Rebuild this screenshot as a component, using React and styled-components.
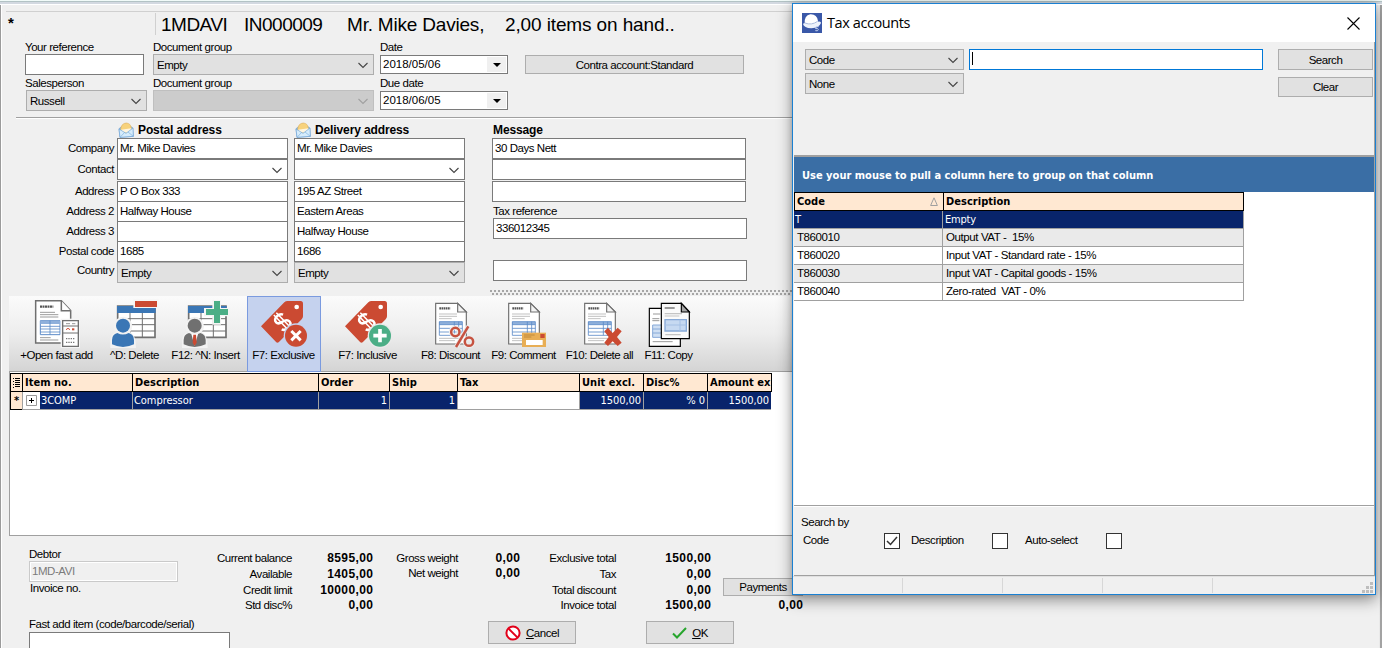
import React from "react";
import styled, { createGlobalStyle } from "styled-components";

const sans = '"Liberation Sans", Arial, sans-serif';
const tahoma = '"DejaVu Sans Condensed", "DejaVu Sans", sans-serif';
const segoe = '"Open Sans", "Noto Sans", sans-serif';

const Global = createGlobalStyle`
  * { box-sizing: border-box; }
  body { margin: 0; background: #f0f0f0; overflow: hidden; }
`;

/* ---------- window frame ---------- */
const Window = styled.div`
  position: relative;
  width: 1382px;
  height: 648px;
  overflow: hidden;
  display: flex;
  flex-direction: column;
  background: #f0f0f0;
  box-shadow: inset 1px 0 #9b9b9b, inset 2px 0 #fff, inset -2px 0 #a3a3a3, inset -3px 0 #e9e9e9;
  font: 11.5px/14px ${sans};
  letter-spacing: -0.45px;
  color: #000;
  white-space: pre;
`;
const TopStrip = styled.div`
  height: 5px;
  flex: none;
  background: linear-gradient(#f1fbf9 0 1px, #b3c3c5 1px 2px, #d3d9e1 2px 4px, #fff 4px);
`;
const Heading = styled.header`
  height: 25px;
  margin: 6px 6px 0;
  border-top: 1px solid #d0d0d0;
  display: flex;
  flex: none;
  font-size: 19px;
  line-height: 25px;
`;
const Star = styled.div`
  width: 149px;
  padding-left: 2px;
  font-size: 15px;
  font-weight: bold;
  line-height: 21px;
`;
const HeadingText = styled.div`
  display: flex;
  border-left: 1px solid #d0d0d0;
  height: 22px;
  margin-top: 1px;
  padding-left: 5px;
  line-height: 24px;
`;
const HeadingPart = styled.span`
  width: ${(p) => p.$w}px;
  letter-spacing: ${(p) => p.$ls}px;
`;

/* ---------- form controls ---------- */
const Box = styled.div`
  width: ${(p) => p.$w}px;
  height: ${(p) => p.$h || 21}px;
  flex: none;
  border: 1px solid ${(p) => (p.$focus ? "#0078d7" : p.$off ? "#cacaca" : "#7a7a7a")};
  background: ${(p) => (p.$off ? "#f0f0f0" : "#fff")};
  color: ${(p) => (p.$off ? "#7b7b7b" : "#000")};
  padding: 0 2px;
  line-height: ${(p) => (p.$h || 21) - 3}px;
  box-shadow: ${(p) => (p.$off ? "inset 0 0 0 1px #fff" : "none")};
`;
const Combo = styled.div`
  width: ${(p) => p.$w}px;
  height: ${(p) => p.$h || 21}px;
  flex: none;
  display: flex;
  align-items: center;
  justify-content: space-between;
  padding: 1px 4px 0 3px;
  border: 1px solid ${(p) => (p.$white ? "#7a7a7a" : p.$off ? "#bfbfbf" : "#adadad")};
  background: ${(p) => (p.$white ? "#fff" : p.$off ? "#ccc" : "#e1e1e1")};
`;
const DateBox = styled.div`
  width: 128px;
  height: 19px;
  margin-top: 1px;
  display: flex;
  justify-content: space-between;
  border: 1px solid #7a7a7a;
  background: #fff;
  padding: 1px 1px 1px 2px;
  line-height: 15px;
  letter-spacing: 0;
`;
const DateArrow = styled.div`
  width: 19px;
  background: #f0f0f0;
  display: grid;
  place-items: center;
`;
const Button = styled.div`
  width: ${(p) => p.$w}px;
  height: ${(p) => p.$h}px;
  flex: none;
  display: flex;
  align-items: center;
  justify-content: center;
  gap: 5px;
  border: 1px solid #adadad;
  background: #e1e1e1;
`;

const Chevron = ({ faint }) => (
  <svg width="12" height="7" viewBox="0 0 12 7">
    <path d="M1.5 1 L6 5.5 L10.5 1" fill="none" stroke={faint ? "#a0a0a0" : "#444"} strokeWidth="1.1" />
  </svg>
);
const Select = ({ children, off, ...rest }) => (
  <Combo $off={off} {...rest}>
    <span>{children}</span>
    <Chevron faint={off} />
  </Combo>
);
const DateField = ({ children }) => (
  <DateBox>
    <span>{children}</span>
    <DateArrow>
      <svg width="8" height="4" viewBox="0 0 8 4"><path d="M0 0H8L4 4Z" fill="#000" /></svg>
    </DateArrow>
  </DateBox>
);

const DocumentFields = styled.section`
  display: flex;
  flex: none;
  height: 81px;
  padding: 4px 0 0 25px;
`;
const FieldColumn = styled.div`
  width: ${(p) => p.$w}px;
  padding-top: ${(p) => p.$top || 0}px;
`;
const Field = styled.div`
  height: 36px;
`;
const Caption = styled.div`
  height: 14px;
  line-height: 14px;
`;
const Divider = styled.div`
  height: 2px;
  flex: none;
  margin: 0 8px 0 16px;
  background: linear-gradient(#a0a0a0 50%, #fff 50%);
`;

/* ---------- addresses ---------- */
const Addresses = styled.section`
  display: flex;
  flex: none;
  height: 170px;
  padding: 3px 0 0 24px;
`;
const AddressLabels = styled.div`
  width: 93px;
  padding: 16px 3px 0 0;
  text-align: right;
`;
const AddressLabel = styled.div`
  height: ${(p) => p.$h}px;
  line-height: 20px;
`;
const AddressColumn = styled.div`
  width: ${(p) => p.$w}px;
`;
const ColumnTitle = styled.div`
  height: 16px;
  display: flex;
  align-items: center;
  gap: 4px;
  padding-left: ${(p) => p.$left || 0}px;
  font-size: 12px;
  font-weight: bold;
  letter-spacing: -0.12px;
`;
const JoinedInputs = styled.div`
  margin-top: ${(p) => p.$top || 0}px;
  & > * + * { margin-top: -1px; }
`;
const Spaced = styled.div`
  margin-top: ${(p) => p.$top || 0}px;
  margin-left: ${(p) => p.$left || 0}px;
`;

const Envelope = () => (
  <svg width="16" height="16" viewBox="0 0 48 48">
    <path d="M3 20 L23 6 L44 17 L46 43 L6 46 Z" fill="#8fbfe8" stroke="#6c9fd0" strokeWidth="2" />
    <path d="M8 21 Q10 4 25 3 Q38 4 40 18 L41 26 L24 33 L9 27Z" fill="#f7d27c" stroke="#dba64a" strokeWidth="1.5" />
    <path d="M9 23 L40 19 L41 26 L25 32 L9 28Z" fill="#fff5df" />
    <path d="M3 21 L24 34 L45 18 L46 43 L6 46 Z" fill="#d6ecfb" stroke="#6fa5d8" strokeWidth="2" />
    <path d="M6 46 L20 31 M46 43 L30 30" stroke="#7db1de" strokeWidth="2" fill="none" />
  </svg>
);

const SplitterRow = styled.div`
  height: 7px;
  flex: none;
  display: flex;
  padding: 1px 0 0 490px;
`;
const Splitter = styled.div`
  width: 303px;
  height: 5px;
  background:
    conic-gradient(from 270deg at 2px 2px, #a6a6a6 90deg, transparent 0) 0 0 / 4px 5px,
    conic-gradient(from 270deg at 2px 2px, #a6a6a6 90deg, transparent 0) 2px 3px / 4px 5px;
`;

/* ---------- toolbar ---------- */
const Toolbar = styled.nav`
  height: 76px;
  flex: none;
  width: 784px;
  margin-left: 9px;
  padding-left: 1px;
  display: flex;
  background: linear-gradient(#fbfbfb, #ededed 50%, #d4d4d4);
  border-bottom: 1px solid #a0a0a0;
`;
const Tool = styled.div`
  width: ${(p) => p.$w}px;
  margin: 0 ${(p) => p.$gap || 0}px;
  height: 76px;
  flex: none;
  display: flex;
  flex-direction: column;
  align-items: center;
  padding-top: ${(p) => (p.$active ? 1 : 2)}px;
  border: ${(p) => (p.$active ? "1px solid #7a9adf" : "none")};
  background: ${(p) => (p.$active ? "#c5d2ee" : "transparent")};
  svg { display: block; flex: none; }
`;
const ToolLabel = styled.div`
  line-height: 14px;
  letter-spacing: -0.45px;
  margin-right: 1px;
`;

const RED = "#cb4a32", BLUE = "#3a76b5", GREEN = "#4bae86", GREY = "#707070";

const Order = ({ x }) => (
  <g transform={`translate(${x} 38)`}>
    <path d="M2 2H68L94 28V124H2Z" fill="#fff" stroke="#707070" strokeWidth="3.5" />
    <path d="M68 2V28H94Z" fill="#f4f4f4" stroke="#707070" strokeWidth="3.5" />
    <path d="M13 17H46" stroke="#555" strokeWidth="7" strokeDasharray="5 1.5" />
    <path d="M12 34H66M12 41H66M12 48H50M12 107H82M12 114H60" stroke="#b5b5b5" strokeWidth="2.5" />
    <path d="M12 57H82V66H12Z" fill="#8fb0db" />
    <path d="M13 57H82V98H13ZM13 66H82M13 77H82M13 88H82M58 57V98M71 57V98" fill="none" stroke="#5d8bc8" strokeWidth="2.5" />
  </g>
);
const GridSheet = ({ x }) => (
  <g transform={`translate(${x} 0)`}>
    <path d="M2 48H114V142H2Z" fill="#fff" stroke={GREY} strokeWidth="5" />
    <path d="M0 48H116V69H0Z" fill={BLUE} />
    <path d="M39 69V142M76 69V142M2 86H114M2 104H114M2 123H114" stroke={GREY} strokeWidth="3" />
  </g>
);
const Person = ({ x, fill, tie }) => (
  <g transform={`translate(${x} 0)`}>
    <path d="M-4 174V152Q-3 131 13 127A28 28 0 1 1 55 127Q73 133 73 174Z" fill="#f2f2f2" />
    <circle cx="34" cy="107" r="21" fill={fill} />
    <path d="M1 163V150Q1 133 17 129Q34 138 51 129Q67 133 67 150V163Q50 171 34 171Q18 171 1 163Z" fill={fill} />
    {tie && <path d="M24 132L34 168L44 132Z" fill="#fff" />}
    {tie && <path d="M30 134H38L40 158L34 168L28 158Z" fill={RED} />}
  </g>
);
const Tag = ({ x }) => (
  <g transform={`translate(${x} 0)`}>
    <path d="M0 109L70 37Q74 33 80 33H119Q126 33 126 41V79Q126 84 122 88L53 157Q47 160 43 154Z" fill={RED} />
    <circle cx="107" cy="51" r="7" fill="#fff" />
    <g transform="translate(65 96) rotate(-44) scale(1.15)" fill="none" stroke="#fff" strokeWidth="6.5">
      <path d="M14 -13Q10 -21 0 -21Q-13 -21 -13 -11Q-13 -3 0 -1Q14 2 14 11Q14 21 0 21Q-12 21 -15 12" />
      <path d="M-4 -29V29M5 -29V29" strokeWidth="4" />
    </g>
  </g>
);

const icons = {
  fast: (
    <svg width="50" height="50" viewBox="96 24 150 150">
      <path d="M107 32H184L212 62V159H107Z" fill="#fff" stroke={GREY} strokeWidth="4.5" />
      <path d="M184 32V62H212" fill="#fff" stroke={GREY} strokeWidth="4.5" />
      <path d="M120 50H160" stroke="#555" strokeWidth="7" strokeDasharray="6 1.5" />
      <path d="M120 67H165M120 74H175M120 81H175M120 143H152M120 150H175" stroke="#888" strokeWidth="2.5" />
      <path d="M121 92H180V134H121Z" fill="#fff" stroke="#5d8bc8" strokeWidth="3" />
      <path d="M121 92H180V102H121Z" fill="#8fb0db" />
      <path d="M121 109H180M121 117H180M121 126H180M150 92V134" stroke="#5d8bc8" strokeWidth="2.5" />
      <path d="M182 86H240V174H182Z" fill="#f4f4f4" />
      <path d="M188 92H235V169H188Z" fill="#fff" stroke={GREY} strokeWidth="4" />
      <path d="M188 108H235M188 129H235" stroke={GREY} strokeWidth="3" />
      <path d="M198 101H210M216 101H226" stroke="#999" strokeWidth="3" />
      <path d="M198 119L204 115L210 119" stroke={RED} strokeWidth="3" fill="none" />
      <path d="M216 115H223V121H216Z" fill={RED} />
      <path d="M198 146H226M198 157H226" stroke="#777" strokeWidth="4" strokeDasharray="4 3" />
    </svg>
  ),
  del: (
    <svg width="50" height="50" viewBox="330 24 150 150">
      <GridSheet x={351} />
      <path d="M400 28H476V54H400Z" fill="#f6f6f6" />
      <path d="M405 33H471V51H405Z" fill={RED} />
      <Person x={335} fill={BLUE} />
    </svg>
  ),
  insert: (
    <svg width="50" height="50" viewBox="543 24 150 150">
      <GridSheet x={564} />
      <path d="M637 30H663V54H688V79H663V104H637V79H612V54H637Z" fill="#f4f4f4" />
      <path d="M642 33H660V57H684V75H660V99H642V75H618V57H642Z" fill={GREEN} />
      <Person x={550} fill={GREY} tie />
    </svg>
  ),
  exclusive: (
    <svg width="50" height="50" viewBox="777 24 150 150">
      <Tag x={783} />
      <circle cx="888" cy="137" r="37" fill="#c5d2ee" />
      <circle cx="888" cy="137" r="33" fill={RED} />
      <path d="M874 123L902 151M902 123L874 151" stroke="#fff" strokeWidth="9" />
    </svg>
  ),
  inclusive: (
    <svg width="50" height="50" viewBox="54 24 150 150">
      <Tag x={60} />
      <circle cx="165" cy="137" r="37" fill="#eaeaea" />
      <circle cx="165" cy="137" r="33" fill={GREEN} />
      <path d="M165 117V157M145 137H185" stroke="#fff" strokeWidth="11" />
    </svg>
  ),
  discount: (
    <svg width="50" height="50" viewBox="303 24 150 150">
      <Order x={330} />
      <g fill="none" stroke="#eeeeee" strokeWidth="13">
        <circle cx="390" cy="125" r="12" /><circle cx="432" cy="156" r="12" /><path d="M429 109L394 170" />
      </g>
      <g fill="none" stroke="#c65341" strokeWidth="7.5">
        <circle cx="391" cy="126" r="12.5" /><circle cx="432" cy="155" r="12.5" /><path d="M430 109L393 171" />
      </g>
    </svg>
  ),
  comment: (
    <svg width="50" height="50" viewBox="519 24 150 150">
      <Order x={546} />
      <path d="M588 128H660V171H588Z" fill="#e8ae55" />
      <path d="M600 150H650V165H600Z" fill="#fff" />
      <path d="M643 132H656V144H643Z" fill={RED} />
      <path d="M594 135H626M594 141H616" stroke="#b98438" strokeWidth="2.5" />
    </svg>
  ),
  deleteAll: (
    <svg width="50" height="50" viewBox="747 24 150 150">
      <Order x={774} />
      <path d="M835 124L846 113L860 129L875 113L887 124L873 141L887 158L875 168L860 154L846 168L835 158L848 141Z" fill={RED} />
    </svg>
  ),
  copy: (
    <svg width="50" height="50" viewBox="954 24 150 150">
      <path d="M970 55H1063V169H970Z" fill="#fff" stroke="#000" strokeWidth="3.5" />
      <path d="M981 72H1003M979 86H1000M979 92H1000M980 155H1040" stroke="#999" strokeWidth="3" />
      <path d="M980 105H1010V142H980Z" fill="#cfdff3" stroke="#86a9d8" strokeWidth="3" />
      <path d="M980 117H1010M980 129H1010" stroke="#86a9d8" strokeWidth="3" />
      <path d="M1006 40H1066L1090 65V146H1006Z" fill="#fafafa" stroke="#000" strokeWidth="3.5" />
      <path d="M1066 40V66H1090Z" fill="#a6a6a6" stroke="#000" strokeWidth="3.5" />
      <path d="M1016 54H1046" stroke="#9a9a9a" strokeWidth="6" />
      <path d="M1016 71H1068M1016 78H1060M1018 134H1064" stroke="#c4c4c4" strokeWidth="3.5" />
      <path d="M1017 89H1081V123H1017Z" fill="#c6d9f1" stroke="#86a9d8" strokeWidth="4" />
      <path d="M1017 105H1081M1062 89V123" stroke="#a5c0e4" strokeWidth="3" />
    </svg>
  ),
};

const tools = [
  { icon: "fast", label: "+Open fast add", w: 94 },
  { icon: "del", label: "^D: Delete", w: 62 },
  { icon: "insert", label: "F12: ^N: Insert", w: 80 },
  { icon: "exclusive", label: "F7: Exclusive", w: 74, gap: 1, active: true },
  { icon: "inclusive", label: "F7: Inclusive", w: 74, gap: 9 },
  { icon: "discount", label: "F8: Discount", w: 74 },
  { icon: "comment", label: "F9: Comment", w: 72 },
  { icon: "deleteAll", label: "F10: Delete all", w: 80 },
  { icon: "copy", label: "F11: Copy", w: 58 },
];

/* ---------- line grid ---------- */
const LineGrid = styled.section`
  height: 164px;
  flex: none;
  margin: 0 0 0 9px;
  width: 784px;
  padding-top: 1px;
  background: #fff;
  border-left: 1px solid #a0a0a0;
  border-bottom: 1px solid #a0a0a0;
`;
const GridHead = styled.div`
  display: flex;
  height: 19px;
  width: fit-content;
  background: #ffe8d2;
  border: 1px solid #000;
  border-left: 0;
  font: bold 11px/18px ${tahoma};
  letter-spacing: 0.03px;
`;
const HeadCell = styled.div`
  width: ${(p) => p.$w}px;
  padding: 0 ${(p) => p.$right || 0}px 0 2px;
  overflow: hidden;
  border-left: 1px solid #000;
  display: flex;
  align-items: center;
  justify-content: space-between;
  svg { flex: none; }
`;
const GridLine = styled.div`
  display: flex;
  height: 18px;
  width: fit-content;
  font: 11px/18px ${tahoma};
  letter-spacing: -0.05px;
`;
const Cell = styled.div`
  width: ${(p) => p.$w}px;
  height: 18px;
  padding: 0 2px 0 1px;
  border-left: 1px solid #a0a0a0;
  border-bottom: 1px solid #a0a0a0;
  background: ${(p) => (p.$blank ? "#fff" : "#08246b")};
  color: #fff;
  text-align: ${(p) => (p.$right ? "right" : "left")};
  display: ${(p) => (p.$flex ? "flex" : "block")};
`;
const Marker = styled.div`
  width: 13px;
  background: #ffe8d2;
  border: 1px solid #000;
  border-top: 0;
  text-align: center;
  font-weight: bold;
  color: #000;
  margin-right: -1px;
`;
const Expander = styled.div`
  width: 17px;
  margin-left: -1px;
  margin-right: 1px;
  background: #fff;
  display: grid;
  place-items: center;
`;

/* ---------- footer ---------- */
const Totals = styled.section`
  display: flex;
  flex: none;
  height: 80px;
  padding-left: 29px;
`;
const Debtor = styled.div`
  width: 161px;
  padding-top: 11px;
`;
const InvoiceCaption = styled(Caption)`
  line-height: 12px;
  padding-left: 1px;
`;
const Figures = styled.div`
  display: grid;
  grid-template-columns: ${(p) => p.$cols};
  grid-template-rows: 16px 16px 16px 15px;
  height: 63px;
  margin-top: 14px;
  text-align: right;
  line-height: 16px;
  & > :nth-last-child(-n + 2) { line-height: 15px; }
`;
const Figure = styled.b`
  font-size: 12px;
  letter-spacing: 0.4px;
  margin-right: -0.4px;
`;
const Payments = styled.div`
  width: 80px;
  margin: 42px 0 0 12px;
  text-align: right;
  line-height: 18px;
`;
const BottomRow = styled.section`
  display: flex;
  flex: none;
  padding-left: 29px;
`;
const FastAdd = styled.div`
  width: 459px;
  padding-top: 1px;
`;
const Actions = styled.div`
  display: flex;
  gap: 70px;
  padding-top: 5px;
`;

/* ---------- dialog ---------- */
const Dialog = styled.div`
  position: absolute;
  left: 792px;
  top: 3px;
  width: 584px;
  height: 592px;
  display: flex;
  flex-direction: column;
  border: 1px solid #1a80d2;
  background: #f0f0f0;
  box-shadow: 0 5px 14px rgba(0, 0, 0, 0.42), 0 0 5px rgba(0, 0, 0, 0.15);
`;
const TitleBar = styled.div`
  height: 38px;
  flex: none;
  display: flex;
  align-items: center;
  background: #fff;
  padding: 0 15px 0 9px;
  font: 14.5px/20px ${segoe};
  letter-spacing: -0.4px;
`;
const Title = styled.div`
  flex: 1;
  margin-left: 5px;
`;
const DialogBody = styled.div`
  height: 534px;
  flex: none;
  border-right: 1px solid #a0a0a0;
  border-bottom: 1px solid #a0a0a0;
  margin-left: 1px;
`;
const SearchPanel = styled.div`
  display: flex;
  height: 113px;
  padding: 7px 0 0 11px;
`;
const Stack = styled.div`
  display: flex;
  flex-direction: column;
  gap: ${(p) => p.$gap || 0}px;
  margin-right: ${(p) => p.$right || 0}px;
`;
const Caret = styled.div`
  width: 1px;
  height: 13px;
  margin-top: 2px;
  background: #000;
`;
const GroupBand = styled.div`
  height: 37px;
  border-top: 2px solid #a0a0a0;
  background: #3a6ea5;
  color: #fff;
  padding-left: 8px;
  font: bold 11px/37px ${tahoma};
  letter-spacing: 0.01px;
`;
const Results = styled.div`
  height: 314px;
  background: #fff;
  border-bottom: 1px solid #a0a0a0;
`;
const ResultLine = styled.div`
  display: grid;
  grid-template-columns: 149px 301px;
  grid-template-rows: 18px;
  height: 18px;
  width: 450px;
  background: ${(p) => (p.$selected ? "#08246b" : p.$alt ? "#eaeaea" : "#fff")};
  color: ${(p) => (p.$selected ? "#fff" : "#000")};
  font-family: ${(p) => (p.$selected ? tahoma : sans)};
  font-size: ${(p) => (p.$selected ? 11 : 11.5)}px;
  letter-spacing: ${(p) => (p.$selected ? -0.2 : -0.4)}px;
  line-height: 17px;
  & > div {
    border-bottom: 1px solid #a0a0a0;
    border-right: 1px solid #a0a0a0;
    padding-left: ${(p) => (p.$selected ? 1 : 3)}px;
  }
  & > div + div { padding-left: ${(p) => (p.$selected ? 2 : 3)}px; }
`;
const SearchBy = styled.div`
  padding: 8px 0 0 7px;
  border-top: 1px solid #fff;
`;
const Checks = styled.div`
  display: flex;
  align-items: center;
  padding-left: 2px;
  margin-top: 4px;
  line-height: 14px;
`;
const CheckLabel = styled.span`
  width: ${(p) => p.$w}px;
  padding-bottom: 2px;
`;
const CheckBox = styled.div`
  width: 16px;
  height: 16px;
  margin-right: ${(p) => p.$right || 0}px;
  border: 1px solid #333;
  background: #fff;
  display: grid;
  place-items: center;
`;
const StatusBar = styled.div`
  flex: 1;
  display: flex;
  padding: 1px 2px 1px 0;
  border-top: 1px solid #e0e0e0;
`;
const StatusPart = styled.div`
  width: ${(p) => p.$w}px;
  border-right: 1px solid #d7d7d7;
`;
const Grip = styled.div`
  margin-left: auto;
  align-self: flex-end;
  line-height: 0;
`;

const AppMark = () => (
  <svg width="20" height="20" viewBox="0 0 60 60">
    <rect width="60" height="60" fill="#3a58a8" />
    <path d="M8 32Q6 8 25 4Q45 3 48 24L50 33Q30 44 9 36Z" fill="#fff" />
    <path d="M3 33Q4 30 9 31Q28 40 48 26Q57 24 57 30Q52 44 28 46Q6 45 3 33Z" fill="#eef3fb" />
    <path d="M9 30Q28 38 47 25" fill="none" stroke="#a9bbdd" strokeWidth="3" />
    <path d="M50 41H42L41 47Q49 45 49 50Q48 55 40 53" fill="none" stroke="#c4d2ee" strokeWidth="3" />
  </svg>
);

const columns = [
  ["Item no.", 110], ["Description", 186], ["Order", 71], ["Ship", 68],
  ["Tax", 122], ["Unit excl.", 64], ["Disc%", 64], ["Amount ex", 64],
];
const taxRows = [
  ["T", "Empty"],
  ["T860010", "Output VAT -  15%"],
  ["T860020", "Input VAT - Standard rate - 15%"],
  ["T860030", "Input VAT - Capital goods - 15%"],
  ["T860040", "Zero-rated  VAT - 0%"],
];

const AddressBlock = ({ title, lines, w }) => (
  <AddressColumn $w={w}>
    <ColumnTitle $left={1}><Envelope />{title}</ColumnTitle>
    <Box $w={171}>{lines[0]}</Box>
    <Select $w={171} $white />
    <JoinedInputs $top={1}>
      {lines.slice(1).map((t, i) => <Box key={i} $w={171}>{t}</Box>)}
    </JoinedInputs>
    <Select $w={171}>Empty</Select>
  </AddressColumn>
);

function TaxDialog() {
  return (
    <Dialog>
      <TitleBar>
        <AppMark />
        <Title>Tax accounts</Title>
        <svg width="13" height="13" viewBox="0 0 13 13">
          <path d="M.5 .5L12.5 12.5M12.5 .5L.5 12.5" stroke="#000" strokeWidth="1.1" />
        </svg>
      </TitleBar>
      <DialogBody>
        <SearchPanel>
          <Stack $gap={3} $right={5}>
            <Select $w={159}>Code</Select>
            <Select $w={159}>None</Select>
          </Stack>
          <Stack $right={15}><Box $w={294} $focus><Caret /></Box></Stack>
          <Stack $gap={7}>
            <Button $w={95} $h={21}>Search</Button>
            <Button $w={95} $h={20}>Clear</Button>
          </Stack>
        </SearchPanel>
        <GroupBand>Use your mouse to pull a column here to group on that column</GroupBand>
        <Results>
          <GridHead>
            <HeadCell $w={149} $right={5}>
              Code
              <svg width="8" height="9" viewBox="0 0 8 9">
                <path d="M4 .8L7.4 8.5H.6Z" fill="none" stroke="#a0a0a0" />
              </svg>
            </HeadCell>
            <HeadCell $w={300}>Description</HeadCell>
          </GridHead>
          {taxRows.map(([code, text], i) => (
            <ResultLine key={code} $selected={i === 0} $alt={i % 2 === 1}>
              <div>{code}</div>
              <div>{text}</div>
            </ResultLine>
          ))}
        </Results>
        <SearchBy>
          <Caption>Search by</Caption>
          <Checks>
            <CheckLabel $w={81}>Code</CheckLabel>
            <CheckBox $right={11}>
              <svg width="12" height="10" viewBox="0 0 12 10"><path d="M1 5L4.5 8.5L11 1" fill="none" stroke="#333" strokeWidth="1.5" /></svg>
            </CheckBox>
            <CheckLabel $w={81}>Description</CheckLabel>
            <CheckBox $right={17} />
            <CheckLabel $w={81}>Auto-select</CheckLabel>
            <CheckBox />
          </Checks>
        </SearchBy>
      </DialogBody>
      <StatusBar>
        <StatusPart $w={110} />
        <StatusPart $w={100} />
        <StatusPart $w={100} />
        <StatusPart $w={110} />
        <Grip>
          <svg width="11" height="11" viewBox="0 0 11 11" fill="#bdbdbd">
            <path d="M8 0h3v3h-3zM8 4h3v3h-3zM4 4h3v3h-3zM8 8h3v3h-3zM4 8h3v3h-3zM0 8h3v3h-3z" />
          </svg>
        </Grip>
      </StatusBar>
    </Dialog>
  );
}

export default function App() {
  return (
    <Window>
      <Global />
      <TopStrip />
      <Heading>
        <Star>*</Star>
        <HeadingText>
          <HeadingPart $w={83} $ls={-0.5}>1MDAVI</HeadingPart>
          <HeadingPart $w={103} $ls={-0.5}>IN000009</HeadingPart>
          <HeadingPart $w={158} $ls={-0.2}>Mr. Mike Davies,</HeadingPart>
          <HeadingPart $w={200} $ls={-0.12}>2,00 items on hand..</HeadingPart>
        </HeadingText>
      </Heading>
      <DocumentFields>
        <FieldColumn $w={128}>
          <Field><Caption>Your reference</Caption><Box $w={119} /></Field>
          <Field><Caption>Salesperson</Caption><Spaced $left={1}><Select $w={121}>Russell</Select></Spaced></Field>
        </FieldColumn>
        <FieldColumn $w={227}>
          <Field><Caption>Document group</Caption><Select $w={221}>Empty</Select></Field>
          <Field><Caption>Document group</Caption><Select $w={221} off /></Field>
        </FieldColumn>
        <FieldColumn $w={145}>
          <Field><Caption>Date</Caption><DateField>2018/05/06</DateField></Field>
          <Field><Caption>Due date</Caption><DateField>2018/06/05</DateField></Field>
        </FieldColumn>
        <FieldColumn $w={220} $top={15}>
          <Button $w={219} $h={19}>Contra account:Standard</Button>
        </FieldColumn>
      </DocumentFields>
      <Divider />
      <Addresses>
        <AddressLabels>
          <AddressLabel $h={21}>Company</AddressLabel>
          <AddressLabel $h={22}>Contact</AddressLabel>
          <AddressLabel $h={20}>Address</AddressLabel>
          <AddressLabel $h={20}>Address 2</AddressLabel>
          <AddressLabel $h={20}>Address 3</AddressLabel>
          <AddressLabel $h={19}>Postal code</AddressLabel>
          <AddressLabel $h={20}>Country</AddressLabel>
        </AddressLabels>
        <AddressBlock w={177} title="Postal address" lines={["Mr. Mike Davies", "P O Box 333", "Halfway House", "", "1685"]} />
        <AddressBlock w={198} title="Delivery address" lines={["Mr. Mike Davies", "195 AZ Street", "Eastern Areas", "Halfway House", "1686"]} />
        <AddressColumn $w={256}>
          <ColumnTitle $left={1}>Message</ColumnTitle>
          <Box $w={254}>30 Days Nett</Box>
          <Box $w={254} />
          <Spaced $top={1}><Box $w={254} /></Spaced>
          <Spaced $top={2} $left={1}><Caption>Tax reference</Caption></Spaced>
          <Spaced $left={1}><Box $w={254}>336012345</Box></Spaced>
          <Spaced $top={21} $left={1}><Box $w={254} /></Spaced>
        </AddressColumn>
      </Addresses>
      <SplitterRow><Splitter /></SplitterRow>
      <Toolbar>
        {tools.map((t) => (
          <Tool key={t.icon} $w={t.w} $gap={t.gap} $active={t.active}>
            {icons[t.icon]}
            <ToolLabel>{t.label}</ToolLabel>
          </Tool>
        ))}
      </Toolbar>
      <LineGrid>
        <GridHead>
          <HeadCell $w={12}>
            <svg width="8" height="15" viewBox="0 0 8 15">
              <path d="M0 3.5H1M0 6.5H1M0 9.5H1M0 12.5H1M2 3.5H7M2 5.5H7M2 7.5H7M2 9.5H7M2 11.5H7" stroke="#000" />
            </svg>
          </HeadCell>
          {columns.map(([name, w]) => <HeadCell key={name} $w={w}>{name}</HeadCell>)}
        </GridHead>
        <GridLine>
          <Marker>*</Marker>
          <Cell $w={110} $flex>
            <Expander>
              <svg width="11" height="11" viewBox="0 0 11 11">
                <path d="M.5 .5H10.5V10.5H.5Z" fill="#fff" stroke="#999" />
                <path d="M3 5.5H8M5.5 3V8" stroke="#000" />
              </svg>
            </Expander>
            3COMP
          </Cell>
          <Cell $w={186}>Compressor</Cell>
          <Cell $w={71} $right>1</Cell>
          <Cell $w={68} $right>1</Cell>
          <Cell $w={122} $blank />
          <Cell $w={64} $right>1500,00</Cell>
          <Cell $w={64} $right>% 0</Cell>
          <Cell $w={64} $right>1500,00</Cell>
        </GridLine>
      </LineGrid>
      <Totals>
        <Debtor>
          <Caption>Debtor</Caption>
          <Box $w={149} $off>1MD-AVI</Box>
          <InvoiceCaption>Invoice no.</InvoiceCaption>
        </Debtor>
        <Figures $cols="102px 81px">
          <span>Current balance</span><Figure>8595,00</Figure>
          <span>Available</span><Figure>1405,00</Figure>
          <span>Credit limit</span><Figure>10000,00</Figure>
          <span>Std disc%</span><Figure>0,00</Figure>
        </Figures>
        <Figures $cols="85px 62px">
          <span>Gross weight</span><Figure>0,00</Figure>
          <span>Net weight</span><Figure>0,00</Figure>
        </Figures>
        <Figures $cols="96px 95px">
          <span>Exclusive total</span><Figure>1500,00</Figure>
          <span>Tax</span><Figure>0,00</Figure>
          <span>Total discount</span><Figure>0,00</Figure>
          <span>Invoice total</span><Figure>1500,00</Figure>
        </Figures>
        <Payments>
          <Button $w={80} $h={18}>Payments</Button>
          <Figure>0,00</Figure>
        </Payments>
      </Totals>
      <BottomRow>
        <FastAdd>
          <Caption>Fast add item (code/barcode/serial)</Caption>
          <Spaced $top={1}><Box $w={201} /></Spaced>
        </FastAdd>
        <Actions>
          <Button $w={88} $h={23}>
            <svg width="16" height="16" viewBox="0 0 16 16">
              <circle cx="8" cy="8" r="6.6" fill="#fff" stroke="#e2001a" strokeWidth="2" />
              <path d="M3.4 3.4L12.6 12.6" stroke="#e2001a" strokeWidth="2" />
            </svg>
            <span><u>C</u>ancel</span>
          </Button>
          <Button $w={88} $h={23}>
            <svg width="15" height="12" viewBox="0 0 15 12">
              <path d="M1 6.5L5 10.5L14 1" fill="none" stroke="#27a52d" strokeWidth="2" />
            </svg>
            <span><u>O</u>K</span>
          </Button>
        </Actions>
      </BottomRow>
      <TaxDialog />
    </Window>
  );
}
